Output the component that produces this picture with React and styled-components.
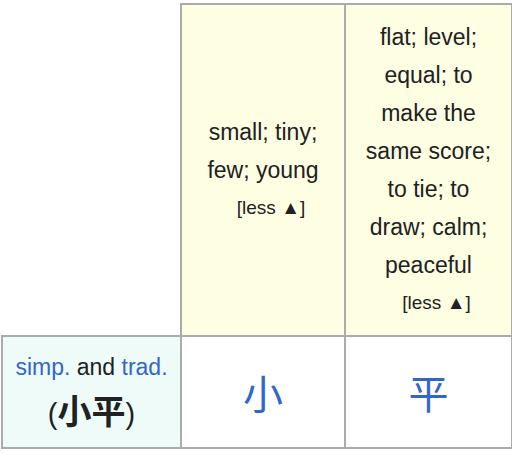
import React from "react";
import styled, { createGlobalStyle } from "styled-components";

const Global = createGlobalStyle`
  html, body { margin: 0; padding: 0; background: #fff; }
  body { font-family: "Liberation Sans", Arial, sans-serif; color: #202122; }
`;

const Wrap = styled.div`
  padding: 3px 0 0 1px;
`;

const Table = styled.table`
  border-collapse: collapse;
  table-layout: fixed;
  width: 510px;
  font-size: 23px;
  line-height: 38px;
`;

const Col = styled.col`
  width: ${(p) => p.$w}px;
`;

const Blank = styled.td`
  border: none;
  padding: 0;
`;

const Gloss = styled.td`
  background: #fefee2;
  border: 2px solid #ababab;
  text-align: center;
  vertical-align: middle;
  padding: 13px 4px;
`;

const Less = styled.div`
  font-size: 19px;
  padding-left: 16px;
`;

const Label = styled.td`
  background: #effbf9;
  border: 2px solid #ababab;
  text-align: center;
  vertical-align: middle;
  height: 108px;
  padding: 2px 4px 0;
`;

const LabelLine = styled.div`
  line-height: 38px;
`;

const Link = styled.span`
  color: #3366cc;
`;

const Head = styled.div`
  line-height: 48px;
  font-size: 29px;
`;

const HeadHan = styled.span`
  font-family: "Noto Sans CJK SC", "Noto Sans CJK TC", sans-serif;
  font-weight: 700;
  font-size: 34px;
`;

const Char = styled.td`
  background: #fff;
  border: 2px solid #ababab;
  text-align: center;
  vertical-align: middle;
  padding: 0;
  font-family: "Noto Sans CJK SC", "Noto Sans CJK TC", sans-serif;
  font-size: 40px;
  color: #3366cc;
`;

export default function App() {
  return (
    <>
      <Global />
      <Wrap>
        <Table>
          <colgroup>
            <Col $w={179} />
            <Col $w={164} />
            <Col $w={167} />
          </colgroup>
          <tbody>
            <tr>
              <Blank />
              <Gloss>
                small; tiny;
                <br />
                few; young
                <Less>[less ▲]</Less>
              </Gloss>
              <Gloss>
                flat; level;
                <br />
                equal; to
                <br />
                make the
                <br />
                same score;
                <br />
                to tie; to
                <br />
                draw; calm;
                <br />
                peaceful
                <Less>[less ▲]</Less>
              </Gloss>
            </tr>
            <tr>
              <Label>
                <LabelLine>
                  <Link>simp.</Link> and <Link>trad.</Link>
                </LabelLine>
                <Head>
                  (<HeadHan>小平</HeadHan>)
                </Head>
              </Label>
              <Char>小</Char>
              <Char>平</Char>
            </tr>
          </tbody>
        </Table>
      </Wrap>
    </>
  );
}
